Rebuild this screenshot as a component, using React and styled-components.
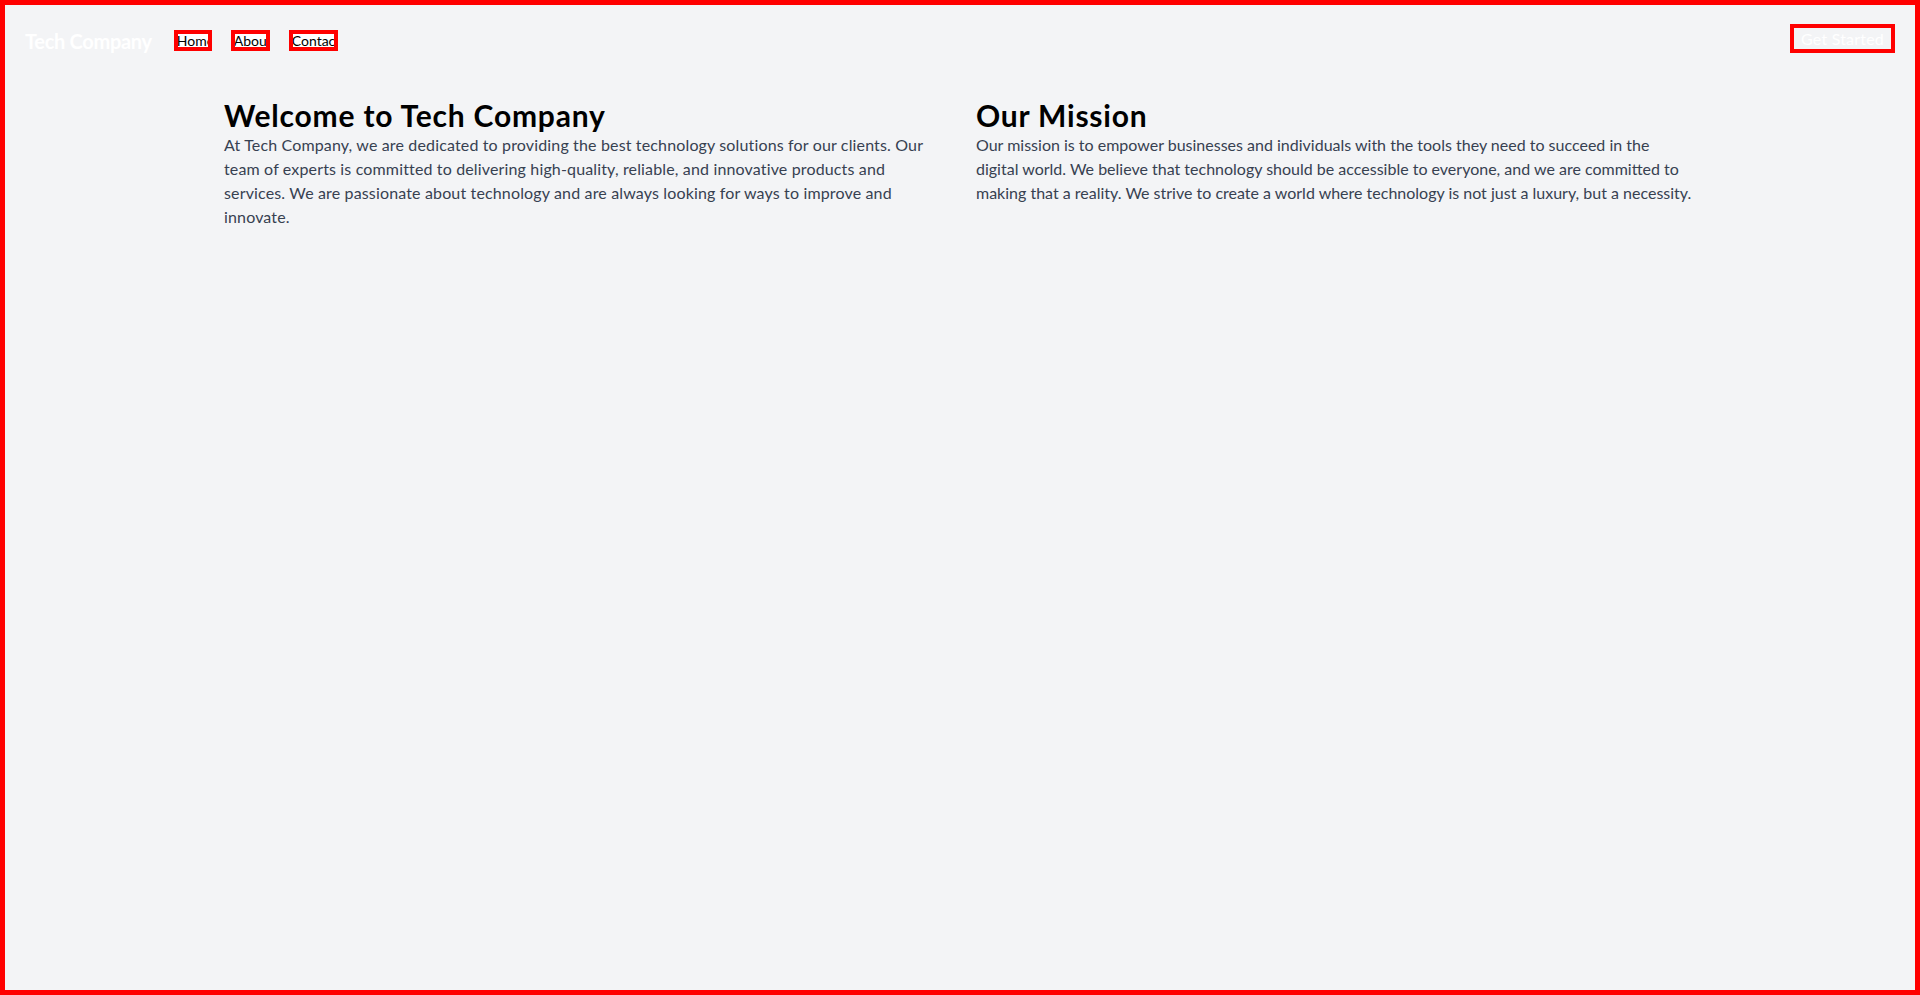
import React from "react";
import styled, { createGlobalStyle } from "styled-components";

const GlobalStyle = createGlobalStyle`
  html, body { margin: 0; padding: 0; }
  body {
    font-family: Lato, "Noto Sans", "Liberation Sans", sans-serif;
    background: #f3f4f6;
  }
  * { box-sizing: border-box; }
`;

const Page = styled.div`
  min-height: 100vh;
  border: 5px solid #ff0000;
  background: #f3f4f6;
`;

const Nav = styled.nav`
  display: flex;
  justify-content: space-between;
  align-items: flex-start;
  padding: 19px 20px 19px 20px;
`;

const NavLeft = styled.div`
  display: flex;
  align-items: flex-start;
  gap: 22px;
`;

const Logo = styled.div`
  margin-top: 3px;
  font-size: 20px;
  line-height: 28px;
  font-weight: 700;
  letter-spacing: -0.3px;
  color: #ffffff;
  white-space: nowrap;
`;

const Links = styled.div`
  display: flex;
  gap: 19px;
  margin-top: 6px;
`;

const NavLink = styled.a`
  display: block;
  width: ${(p) => p.$w}px;
  height: 21px;
  padding-left: 3px;
  background: #ffffff;
  color: #000000;
  font-size: 14px;
  line-height: 21px;
  white-space: nowrap;
  overflow: hidden;
  text-decoration: none;
  outline: 4px solid #ff0000;
  outline-offset: -4px;
  cursor: pointer;
`;

const CTA = styled.button`
  width: 105px;
  height: 29px;
  padding: 0;
  border: none;
  background: transparent;
  color: #ffffff;
  font-family: inherit;
  font-size: 16px;
  line-height: 20px;
  letter-spacing: 0.2px;
  white-space: nowrap;
  outline: 4px solid #ff0000;
  outline-offset: -4px;
  cursor: pointer;
`;

const Container = styled.main`
  max-width: 1536px;
  margin: 0 auto;
  padding: 23px 32px 0;
`;

const Grid = styled.div`
  display: grid;
  grid-template-columns: 1fr 1fr;
  gap: 32px;
`;

const Section = styled.section``;

const Heading = styled.h1`
  margin: 0;
  font-size: 30px;
  line-height: 36px;
  font-weight: 700;
  letter-spacing: 0.8px;
  color: #000000;
`;

const Text = styled.p`
  margin: 0;
  font-size: 16px;
  line-height: 24px;
  letter-spacing: ${(p) => p.$track}px;
  color: #374151;
`;

export default function App() {
  return (
    <>
      <GlobalStyle />
      <Page>
        <Nav>
          <NavLeft>
            <Logo>Tech Company</Logo>
            <Links>
              <NavLink $w={38}>Home</NavLink>
              <NavLink $w={39}>About</NavLink>
              <NavLink $w={49}>Contact</NavLink>
            </Links>
          </NavLeft>
          <CTA>Get Started</CTA>
        </Nav>
        <Container>
          <Grid>
            <Section>
              <Heading>Welcome to Tech Company</Heading>
              <Text $track={0.15}>
                At Tech Company, we are dedicated to providing the best technology solutions for our
                clients. Our team of experts is committed to delivering high-quality, reliable, and
                innovative products and services. We are passionate about technology and are always
                looking for ways to improve and innovate.
              </Text>
            </Section>
            <Section>
              <Heading>Our Mission</Heading>
              <Text $track={0}>
                Our mission is to empower businesses and individuals with the tools they need to
                succeed in the
                <br />
                digital world. We believe that technology should be accessible to everyone, and we
                are committed to making that a reality. We strive to create a world where technology
                is not just a luxury, but a necessity.
              </Text>
            </Section>
          </Grid>
        </Container>
      </Page>
    </>
  );
}
